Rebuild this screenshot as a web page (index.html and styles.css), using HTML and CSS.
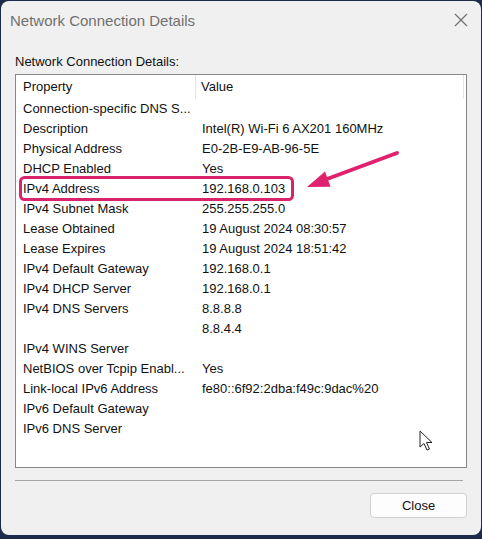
FILE: index.html
```html
<!DOCTYPE html>
<html lang="en">
  <head>
    <meta charset="UTF-8" />
    <title>Network Connection Details</title>
    <link rel="stylesheet" href="styles.css">
  </head>
  <body>
    <div class="window">
      <div class="titlebar">
        <span class="title">Network Connection Details</span>
        <svg class="close-x" width="14" height="14" viewBox="0 0 14 14">
          <path d="M1 1L13 13M13 1L1 13" stroke="#707070" stroke-width="1.2" fill="none" />
        </svg>
      </div>

      <div class="content">
        <p class="label">Network Connection Details:</p>

        <div class="listbox">
          <div class="list-head">
            <div class="head-cell">Property</div>
            <div class="head-cell">Value</div>
          </div>

          <div class="rows" id="rows"></div>

          <!-- annotation drawn over the list -->
          <svg class="overlay" width="450" height="392" viewBox="0 0 450 392">
            <rect x="4.5" y="102.5" width="272" height="22" rx="4" ry="4"
              fill="none" stroke="#d9246c" stroke-width="3" />
            <path d="M381 78L311 104" stroke="#e0226e" stroke-width="4"
              stroke-linecap="round" fill="none" />
            <path d="M291 112L309 96.5L314.5 111.8Z" fill="#e0226e" />
            <path d="M404 356L404 372L408 368.5L411 375L413.5 374L410.5 367.5L416 367.5Z"
              fill="#fff" stroke="#222" stroke-width="1" stroke-linejoin="round" />
          </svg>
        </div>

        <div class="separator"></div>

        <div class="buttons">
          <button class="close-btn">Close</button>
        </div>
      </div>
    </div>

    <script>
      const details = [
        ["Connection-specific DNS S...", ""],
        ["Description", "Intel(R) Wi-Fi 6 AX201 160MHz"],
        ["Physical Address", "E0-2B-E9-AB-96-5E"],
        ["DHCP Enabled", "Yes"],
        ["IPv4 Address", "192.168.0.103"],
        ["IPv4 Subnet Mask", "255.255.255.0"],
        ["Lease Obtained", "19 August 2024 08:30:57"],
        ["Lease Expires", "19 August 2024 18:51:42"],
        ["IPv4 Default Gateway", "192.168.0.1"],
        ["IPv4 DHCP Server", "192.168.0.1"],
        ["IPv4 DNS Servers", "8.8.8.8"],
        ["", "8.8.4.4"],
        ["IPv4 WINS Server", ""],
        ["NetBIOS over Tcpip Enabl...", "Yes"],
        ["Link-local IPv6 Address", "fe80::6f92:2dba:f49c:9dac%20"],
        ["IPv6 Default Gateway", ""],
        ["IPv6 DNS Server", ""],
      ];

      const rows = document.getElementById("rows");
      details.forEach(([prop, value]) => {
        const row = document.createElement("div");
        row.className = "row";
        row.innerHTML = `<div class="cell prop">${prop}</div><div class="cell value">${value}</div>`;
        rows.appendChild(row);
      });
    </script>
  </body>
</html>
```

FILE: styles.css
```css
body {
  margin: 0;
  background: #1c2a4c;
  font-family: "Liberation Sans", Arial, sans-serif;
  overflow: hidden;
}

.window {
  width: 480px;
  height: 534px;
  margin: 1px 0 0 1px;
  background: #f0f0f0;
  border-radius: 8px;
  display: flex;
  flex-direction: column;
  overflow: hidden;
}

.titlebar {
  height: 38px;
  display: flex;
  align-items: center;
  justify-content: space-between;
  padding: 0 13px 0 9px;
}

.title {
  font-size: 15px;
  color: #707070;
}

.content {
  padding: 0 14px;
}

.label {
  margin: 14px 0 0;
  font-size: 13px;
  line-height: 17px;
  color: #111;
}

.listbox {
  position: relative;
  margin-top: 4px;
  height: 392px;
  border: 1px solid #84878c;
  background: #fff;
}

.list-head {
  display: grid;
  grid-template-columns: 180px 268px;
  height: 24px;
}

.head-cell {
  font-size: 13px;
  line-height: 24px;
  color: #111;
  padding-left: 7px;
  border-right: 1px solid #e5e5e5;
}

.head-cell + .head-cell {
  padding-left: 5px;
}

.row {
  display: grid;
  grid-template-columns: 180px 268px;
  height: 20px;
}

.cell {
  font-size: 13px;
  line-height: 20px;
  color: #111;
  white-space: nowrap;
  overflow: hidden;
}

.prop {
  padding-left: 7px;
}

.value {
  padding-left: 6px;
}

.overlay {
  position: absolute;
  left: 0;
  top: 0;
  pointer-events: none;
}

.separator {
  margin-top: 12px;
  width: 448px;
  border-top: 1px solid #a6a6a6;
}

.buttons {
  display: flex;
  justify-content: flex-end;
  margin-top: 12px;
}

.close-btn {
  width: 97px;
  height: 25px;
  font-family: "Liberation Sans", Arial, sans-serif;
  font-size: 13px;
  color: #111;
  background: #fdfdfd;
  border: 1px solid #d0d0d0;
  border-radius: 4px;
  padding: 0;
}
```
